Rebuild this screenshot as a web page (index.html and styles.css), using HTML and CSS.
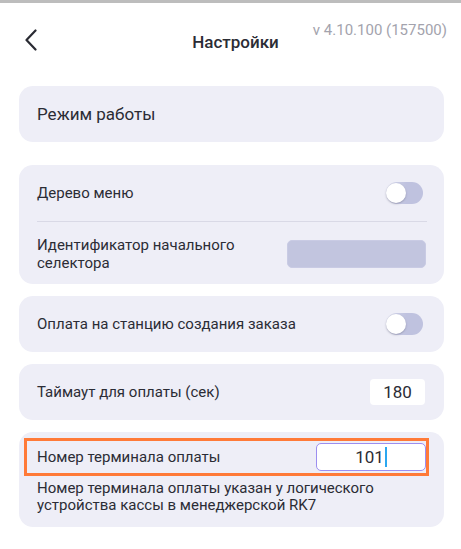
FILE: index.html
```html
<!DOCTYPE html>
<html lang="ru">
<head>
<meta charset="utf-8">
<title>Настройки</title>
<link rel="stylesheet" href="styles.css">
</head>
<body>
<div class="statusbar"></div>
<header class="header">
  <button class="back" aria-label="Назад">
    <svg width="14" height="22" viewBox="0 0 14 22"><path d="M11.5 1.5 L2.5 11 L11.5 20.5" fill="none" stroke="#2a2b33" stroke-width="2.2" stroke-linecap="round" stroke-linejoin="round"/></svg>
  </button>
  <h1 class="title">Настройки</h1>
  <div class="version">v 4.10.100 (157500)</div>
</header>
<main class="content">
  <section class="card card-single">
    <div class="row row-big">Режим работы</div>
  </section>

  <section class="card card-group">
    <div class="row">
      <span class="label">Дерево меню</span>
      <span class="toggle"><span class="knob"></span></span>
    </div>
    <div class="divider"></div>
    <div class="row row-two">
      <span class="label">Идентификатор начального<br>селектора</span>
      <span class="field-disabled"></span>
    </div>
  </section>

  <section class="card card-single">
    <div class="row">
      <span class="label">Оплата на станцию создания заказа</span>
      <span class="toggle"><span class="knob"></span></span>
    </div>
  </section>

  <section class="card card-single card-input">
    <div class="row">
      <span class="label">Таймаут для оплаты (сек)</span>
      <span class="field">180</span>
    </div>
  </section>

  <section class="card card-term">
    <div class="highlight">
      <span class="label">Номер терминала оплаты</span>
      <span class="field field-active">101<span class="caret"></span></span>
    </div>
    <p class="hint">Номер терминала оплаты указан у логического<br>устройства кассы в менеджерской RK7</p>
  </section>
</main>
</body>
</html>
```

FILE: styles.css
```css
* { box-sizing: border-box; }
html, body { margin: 0; padding: 0; }
body {
  width: 461px;
  height: 549px;
  background: #ffffff;
  font-family: Roboto, "Noto Sans", sans-serif;
  color: #2b2c35;
  overflow: hidden;
}
.statusbar { height: 3px; background: #bdbdbd; }
.header {
  height: 83px;
  display: grid;
  grid-template-columns: 1fr auto 1fr;
  align-items: start;
  padding: 0 14px 0 24px;
}
.back {
  border: 0;
  background: none;
  padding: 0;
  margin-top: 26px;
  width: 16px;
  height: 24px;
  justify-self: start;
  display: flex;
}
.title {
  margin: 28px 0 0;
  font-size: 17px;
  font-weight: 500;
  line-height: 22px;
  color: #2b2c35;
}
.version {
  justify-self: end;
  margin-top: 17px;
  font-size: 15px;
  line-height: 20px;
  color: #a3a3ad;
}
.content {
  display: flex;
  flex-direction: column;
  gap: 12px;
  padding-left: 19px;
}
.card {
  width: 425px;
  background: #eeeef7;
  border-radius: 14px;
}
.card-single { height: 56px; display: flex; align-items: center; padding: 0 21px 0 18px; }
.card-input { padding-right: 19px; }
.card-single .row { flex: 1; }
.card:first-child { margin-bottom: 11px; }
.row {
  display: flex;
  align-items: center;
  justify-content: space-between;
}
.row-big { font-size: 17px; }
.label { font-size: 15px; line-height: 18px; }
.card-group { padding: 0 18px 0 18px; height: 119px; }
.card-group .row:first-child { height: 56px; padding-right: 3px; }
.divider { height: 1px; background: #d9d9e6; margin-right: -1px; }
.row-two { height: 62px; align-items: center; padding-top: 2px; }
.field-disabled {
  width: 139px;
  height: 28px;
  background: #c2c5df;
  border: 1px solid #c9cbe4;
  border-radius: 5px;
}
.toggle {
  position: relative;
  width: 37px;
  height: 22px;
  border-radius: 11px;
  background: linear-gradient(90deg, #d8daec 0%, #bfc2df 55%);
  flex: none;
}
.knob {
  position: absolute;
  left: 0;
  top: 1px;
  width: 20px;
  height: 20px;
  border-radius: 50%;
  background: #ffffff;
  box-shadow: 0 1px 2px rgba(60, 60, 90, 0.35);
}
.field {
  width: 55px;
  height: 26px;
  background: #ffffff;
  border-radius: 4px;
  font-size: 17px;
  line-height: 26px;
  text-align: center;
}
.card-term { height: 95px; padding: 6px 15px 0 5px; }
.highlight {
  height: 38px;
  border: 3px solid #ff7a38;
  display: flex;
  align-items: center;
  justify-content: space-between;
  padding: 0 0 0 10px;
}
.field-active {
  position: relative;
  width: 110px;
  height: 28px;
  border: 1px solid #9c8ef0;
  border-radius: 5px;
  line-height: 26px;
}
.caret {
  display: inline-block;
  width: 2px;
  height: 20px;
  background: #2ba7f0;
  vertical-align: -4px;
  margin-left: 1px;
}
.hint {
  margin: 4px 0 0 13px;
  font-size: 15px;
  line-height: 17px;
}
```
